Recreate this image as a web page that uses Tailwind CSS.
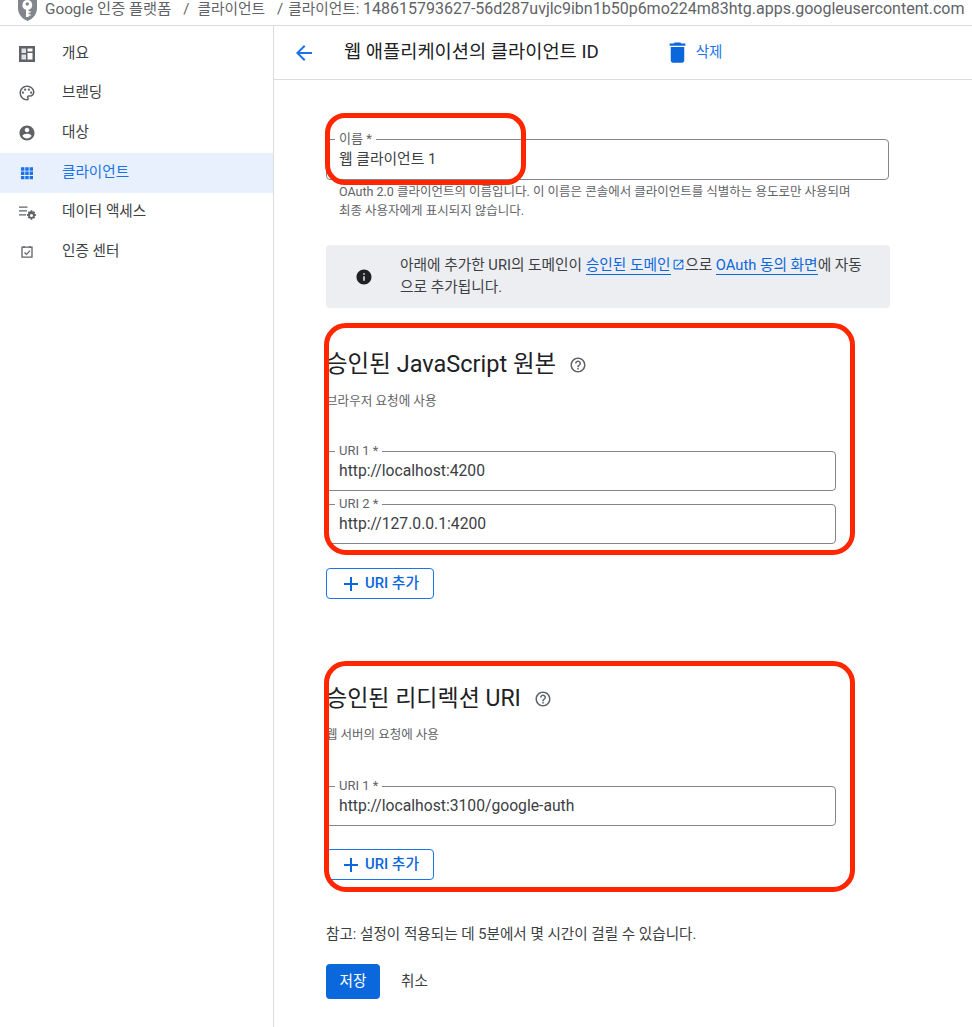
<!DOCTYPE html>
<html lang="ko">
<head>
    <meta charset="UTF-8">
    <title>웹 애플리케이션의 클라이언트 ID</title>
    <script src="https://cdn.jsdelivr.net/npm/@tailwindcss/browser@4"></script>
</head>
<body class="bg-white text-[#3c4043] font-['Roboto','Noto_Sans_CJK_KR',sans-serif]">
<div class="relative w-[972px] h-[1027px] overflow-hidden flex flex-col">

    <!-- breadcrumb -->
    <div class="h-[26px] shrink-0 border-b border-[#dadce0] flex items-start pl-[17px] whitespace-nowrap overflow-hidden">
        <svg class="w-[21px] h-[26px] -mt-[4px] shrink-0" viewBox="0 0 21 26"><path fill="#80868b" fill-rule="evenodd" d="M10.500 0 L20 3.500 V12 C20 18 16 23 10.500 25 C5 23 1 18 1 12 V3.500 Z"/><path fill="#fff" fill-rule="evenodd" d="M10.300 4a5 5 0 0 1 1.300 9.800V15.200h2v1.600h-2v1.400h2v1.600h-2v1.200H9V13.800A5 5 0 0 1 10.300 4zM10.300 6.300a1.700 1.700 0 1 0 0 3.400 1.700 1.700 0 0 0 0-3.400z"/></svg>
        <span class="ml-[7px] text-[15.3px] leading-[18px] text-[#5f6368]">Google 인증 플랫폼</span>
        <span class="ml-[12px] text-[15px] leading-[18px] text-[#5f6368]">/</span>
        <span class="ml-[8px] text-[14.7px] leading-[18px] text-[#5f6368]">클라이언트</span>
        <span class="ml-[12px] text-[15px] leading-[18px] text-[#5f6368]">/</span>
        <span class="ml-[5px] text-[14.7px] leading-[18px] text-[#5f6368]">클라이언트: <span class="text-[16px]">148615793627-56d287uvjlc9ibn1b50p6mo224m83htg.apps.googleusercontent.com</span></span>
    </div>

    <div class="flex flex-1 min-h-0">
        <!-- sidebar -->
        <nav class="w-[274px] shrink-0 border-r border-[#dadce0] pt-[8px] text-[14.6px] text-[#3c4043]">
            <a class="h-[39.5px] flex items-center pl-[19px] gap-[27px]">
                <svg class="w-4 h-4" viewBox="0 0 16 16"><rect width="16" height="16" fill="#5f6368"/><path fill="#dfe1e5" d="M2.500 2.500h4.500v4.500H2.500zM2.500 8.500h4.500v5H2.500z"/><path fill="#fff" d="M8.500 2.500h5v3h-5zM8.500 7h5v6.500h-5z"/></svg>
                <span>개요</span>
            </a>
            <a class="h-[39.5px] flex items-center pl-[18px] gap-[26px]">
                <svg class="w-[18px] h-[18px]" viewBox="0 0 24 24" fill="#5f6368"><path d="M12 22C6.490 22 2 17.510 2 12S6.490 2 12 2s10 4.040 10 9c0 3.310-2.690 6-6 6h-1.770c-.280 0-.500.220-.500.500 0 .120.050.230.130.330.410.470.640 1.060.640 1.670 0 1.380-1.120 2.500-2.500 2.500zm0-18c-4.410 0-8 3.590-8 8s3.590 8 8 8c.280 0 .500-.220.500-.500 0-.160-.080-.280-.140-.350-.410-.460-.630-1.050-.630-1.650 0-1.380 1.120-2.500 2.500-2.500H16c2.210 0 4-1.790 4-4 0-3.860-3.590-7-8-7z"/><circle cx="6.500" cy="11.500" r="1.500"/><circle cx="9.500" cy="7.500" r="1.500"/><circle cx="14.500" cy="7.500" r="1.500"/><circle cx="17.500" cy="11.500" r="1.500"/></svg>
                <span>브랜딩</span>
            </a>
            <a class="h-[39.5px] flex items-center pl-[18px] gap-[26px]">
                <svg class="w-[18px] h-[18px]" viewBox="0 0 24 24" fill="#5f6368"><path d="M12 2C6.480 2 2 6.480 2 12s4.480 10 10 10 10-4.480 10-10S17.520 2 12 2zm0 3c1.660 0 3 1.340 3 3s-1.340 3-3 3-3-1.340-3-3 1.340-3 3-3zm0 14.200c-2.500 0-4.710-1.280-6-3.220.030-1.990 4-3.080 6-3.080 1.990 0 5.970 1.090 6 3.080-1.290 1.940-3.500 3.220-6 3.220z"/></svg>
                <span>대상</span>
            </a>
            <a class="h-[40px] flex items-center pl-[19px] gap-[27px] bg-[#e8f0fe] text-[#1a73e8]">
                <svg class="w-4 h-4" viewBox="0 0 16 16" fill="#1a73e8"><path d="M1 1.500h4v4H1zM6 1.500h4v4H6zM11 1.500h4v4h-4zM1 6.500h4v4H1zM6 6.500h4v4H6zM11 6.500h4v4h-4zM1 11.500h4v4H1zM6 11.500h4v4H6zM11 11.500h4v4h-4z" transform="translate(1.100 1) scale(.86)"/></svg>
                <span>클라이언트</span>
            </a>
            <a class="h-[39.5px] flex items-center pl-[18px] gap-[26px]">
                <svg class="w-[18px] h-[18px]" viewBox="0 0 18 18" fill="#5f6368"><path d="M1 3.500h8.500v1.200H1zM1 7.300h8v1.200H1zM1 11.200h7v1.200H1z"/><path fill-rule="evenodd" transform="translate(-2.400 -1.900) scale(1.220)" d="M12.300 7.500h1.400l.300 1.300 1-.500 1 1-.600 1 1.300.400v1.400l-1.300.300.600 1.100-1 1-1-.600-.300 1.300h-1.400l-.300-1.300-1 .600-1-1 .600-1.100-1.300-.300v-1.400l1.300-.400-.600-1 1-1 1 .500zM13 10.500a1.300 1.300 0 1 0 0 2.600 1.300 1.300 0 0 0 0-2.600z"/></svg>
                <span>데이터 액세스</span>
            </a>
            <a class="h-[39.5px] flex items-center pl-[19px] gap-[27px]">
                <svg class="w-4 h-4" viewBox="0 0 16 16" fill="none" stroke="#5f6368"><path stroke-width="1.300" d="M3 3.200h10v10H3z"/><path stroke-width="1.200" d="M5.500 8.500l2 2 3.500-3.800"/><path stroke-width="1.400" d="M5 2v2M11 2v2"/></svg>
                <span>인증 센터</span>
            </a>
        </nav>

        <!-- main -->
        <div class="flex-1 min-w-0">
            <header class="h-[54px] border-b border-[#dadce0] flex items-center pl-[19px]">
                <svg class="w-[24px] h-[24px] -ml-[1px]" viewBox="0 0 24 24" fill="#1a73e8"><path d="M20 11H7.830l5.590-5.590L12 4l-8 8 8 8 1.410-1.410L7.830 13H20v-2z"/></svg>
                <h1 class="ml-[28px] text-[18.7px] text-[#202124]">웹 애플리케이션의 클라이언트 ID</h1>
                <button class="ml-[65px] flex items-center text-[14.5px] text-[#1a73e8]">
                    <svg class="w-[27px] h-[27px]" viewBox="0 0 24 24" fill="#0b67dc"><path d="M6 19c0 1.100.9 2 2 2h8c1.100 0 2-.9 2-2V7H6v12zM19 4h-3.500l-1-1h-5l-1 1H5v2h14V4z"/></svg>
                    <span class="ml-[5px]">삭제</span>
                </button>
            </header>

            <main class="pl-[52px]">
                <!-- 이름 -->
                <div class="relative mt-[59px] w-[563px] h-[41px] border border-[#80868b] rounded-[4px] flex items-center pl-[12px] text-[14.8px]">
                    <span class="absolute left-[8px] -top-[9px] bg-white px-[4px] text-[13px] leading-[16px] text-[#5f6368]">이름 *</span>
                    웹 클라이언트 1
                </div>
                <p class="mt-[2px] pl-[13px] w-[563px] text-[12.5px] leading-[19px] text-[#5f6368]">OAuth 2.0 클라이언트의 이름입니다. 이 이름은 콘솔에서 클라이언트를 식별하는 용도로만 사용되며<br>최종 사용자에게 표시되지 않습니다.</p>

                <!-- 안내 -->
                <div class="mt-[25px] w-[564px] h-[63px] bg-[#eceef2] rounded-[4px] flex items-center">
                    <svg class="ml-[29px] w-[18px] h-[18px] shrink-0" viewBox="0 0 24 24" fill="#202124"><path d="M12 2C6.480 2 2 6.480 2 12s4.480 10 10 10 10-4.480 10-10S17.520 2 12 2zm1 15h-2v-6h2v6zm0-8h-2V7h2v2z"/></svg>
                    <p class="ml-[27px] whitespace-nowrap -mt-[2px] text-[14.7px] leading-[22px] text-[#3c4043]">아래에 추가한 URI의 도메인이 <a class="text-[#0b67dc] border-b border-[#0b67dc]">승인된 도메인</a> <svg class="inline w-[13px] h-[13px] -mt-[2px] -ml-[2px]" viewBox="0 0 24 24" fill="#0b67dc"><path d="M19 19H5V5h7V3H5c-1.110 0-2 .9-2 2v14c0 1.100.89 2 2 2h14c1.100 0 2-.9 2-2v-7h-2v7zM14 3v2h3.590l-9.830 9.830 1.410 1.410L19 6.410V10h2V3h-7z"/></svg>으로 <a class="text-[#0b67dc] border-b border-[#0b67dc]">OAuth 동의 화면</a>에 자동<br>으로 추가됩니다.</p>
                </div>

                <!-- 승인된 JavaScript 원본 -->
                <section class="mt-[41px]">
                    <h2 class="h-[32px] flex items-center text-[23.5px] text-[#202124]">승인된 JavaScript 원본
                        <svg class="ml-[13px] w-[18px] h-[18px]" viewBox="0 0 24 24" fill="#5f6368"><path d="M11 18h2v-2h-2v2zm1-16C6.480 2 2 6.480 2 12s4.480 10 10 10 10-4.480 10-10S17.520 2 12 2zm0 18c-4.410 0-8-3.590-8-8s3.590-8 8-8 8 3.590 8 8-3.590 8-8 8zm0-14c-2.210 0-4 1.790-4 4h2c0-1.100.9-2 2-2s2 .9 2 2c0 2-3 1.750-3 5h2c0-2.250 3-2.500 3-5 0-2.210-1.790-4-4-4z"/></svg>
                    </h2>
                    <p class="mt-[12px] h-[16px] text-[12.6px] leading-[16px] text-[#5f6368]">브라우저 요청에 사용</p>
                    <div class="relative mt-[42px] w-[510px] h-[40px] border border-[#80868b] rounded-[4px] flex items-center pl-[12px] text-[15.7px]">
                        <span class="absolute left-[8px] -top-[9px] bg-white px-[4px] text-[13px] leading-[16px] text-[#5f6368]">URI 1 *</span>
                        http://localhost:4200
                    </div>
                    <div class="relative mt-[13px] w-[510px] h-[40px] border border-[#80868b] rounded-[4px] flex items-center pl-[12px] text-[15.7px]">
                        <span class="absolute left-[8px] -top-[9px] bg-white px-[4px] text-[13px] leading-[16px] text-[#5f6368]">URI 2 *</span>
                        http://127.0.0.1:4200
                    </div>
                    <button class="mt-[24px] w-[108px] h-[31px] border border-[#1a73e8] rounded-[4px] flex items-center pl-[12px] gap-[2px] text-[14.8px] font-medium text-[#0b67dc]">
                        <svg class="w-[24px] h-[24px]" viewBox="0 0 24 24" fill="#0b67dc"><path d="M19 13h-6v6h-2v-6H5v-2h6V5h2v6h6v2z"/></svg>URI 추가
                    </button>
                </section>

                <!-- 승인된 리디렉션 URI -->
                <section class="mt-[84px]">
                    <h2 class="h-[32px] flex items-center text-[23px] text-[#202124]">승인된 리디렉션 URI
                        <svg class="ml-[13px] w-[18px] h-[18px]" viewBox="0 0 24 24" fill="#5f6368"><path d="M11 18h2v-2h-2v2zm1-16C6.480 2 2 6.480 2 12s4.480 10 10 10 10-4.480 10-10S17.520 2 12 2zm0 18c-4.410 0-8-3.590-8-8s3.590-8 8-8 8 3.590 8 8-3.590 8-8 8zm0-14c-2.210 0-4 1.790-4 4h2c0-1.100.9-2 2-2s2 .9 2 2c0 2-3 1.750-3 5h2c0-2.250 3-2.500 3-5 0-2.210-1.790-4-4-4z"/></svg>
                    </h2>
                    <p class="mt-[12px] h-[16px] text-[12.5px] leading-[16px] text-[#5f6368]">웹 서버의 요청에 사용</p>
                    <div class="relative mt-[43px] w-[510px] h-[40px] border border-[#80868b] rounded-[4px] flex items-center pl-[12px] text-[15.7px]">
                        <span class="absolute left-[8px] -top-[9px] bg-white px-[4px] text-[13px] leading-[16px] text-[#5f6368]">URI 1 *</span>
                        http://localhost:3100/google-auth
                    </div>
                    <button class="mt-[23px] w-[108px] h-[31px] border border-[#1a73e8] rounded-[4px] flex items-center pl-[12px] gap-[2px] text-[14.8px] font-medium text-[#0b67dc]">
                        <svg class="w-[24px] h-[24px]" viewBox="0 0 24 24" fill="#0b67dc"><path d="M19 13h-6v6h-2v-6H5v-2h6V5h2v6h6v2z"/></svg>URI 추가
                    </button>
                </section>

                <p class="mt-[44px] h-[20px] text-[14.6px] leading-[20px] text-[#3c4043]">참고: 설정이 적용되는 데 5분에서 몇 시간이 걸릴 수 있습니다.</p>
                <div class="mt-[20px] flex items-center">
                    <button class="w-[54px] h-[35px] bg-[#0b67dc] rounded-[4px] text-[14.6px] text-white">저장</button>
                    <button class="ml-[21px] text-[14.6px] text-[#3c4043]">취소</button>
                </div>
            </main>
        </div>
    </div>

    <!-- 빨간 표시 -->
    <div class="absolute left-[325px] top-[113px] w-[201px] h-[72px] border-[5px] border-[#ff2600] rounded-[20px]"></div>
    <div class="absolute left-[324px] top-[323px] w-[531px] h-[232px] border-[5px] border-[#ff2600] rounded-[22px]"></div>
    <div class="absolute left-[324px] top-[661px] w-[531px] h-[231px] border-[5px] border-[#ff2600] rounded-[22px]"></div>
</div>
</body>
</html>
